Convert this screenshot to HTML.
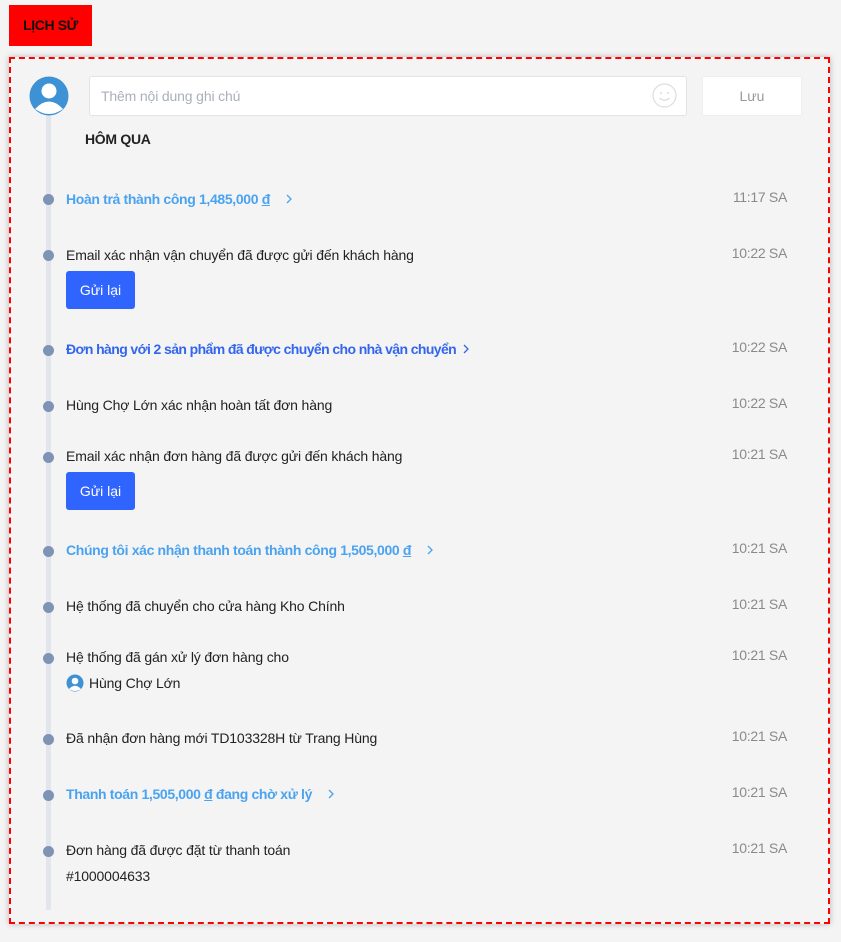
<!DOCTYPE html>
<html><head><meta charset="utf-8"><style>
*{margin:0;padding:0;box-sizing:border-box}
body{width:841px;height:942px;background:#f4f4f4;font-family:"Liberation Sans",Arial,sans-serif;position:relative;overflow:hidden;color:#222}
.a{position:absolute;white-space:nowrap}
.t{font-size:14px;left:66px;line-height:18px;letter-spacing:-0.15px}
.tm{font-size:14px;color:#8a8a8a;right:54px;line-height:18px;letter-spacing:-0.3px}
.dot{position:absolute;left:43px;width:11px;height:11px;border-radius:50%;background:#7f93b5}
.lb{color:#4aa3f0;font-weight:bold;letter-spacing:-0.35px}
.db{color:#3366ee;font-weight:bold;letter-spacing:-0.6px}
.btn{position:absolute;left:66px;width:69px;height:38px;background:#2f64ff;color:#fff;border-radius:3px;font-size:14px;line-height:38px;text-align:center}
.ch{display:inline-block;vertical-align:middle;margin-left:12px;margin-top:-3px}
</style></head><body>
<div class="a" style="left:9px;top:5px;width:83px;height:41px;background:#f00;color:#111;font-weight:bold;font-size:14px;line-height:41px;text-align:center;letter-spacing:-0.4px">LỊCH SỬ</div>
<div class="a" style="left:9px;top:57px;width:821px;height:867px;border:2px dashed #f00;box-shadow:0 0 6px rgba(0,0,0,.25)"></div>
<div class="a" style="left:46px;top:110px;width:5px;height:800px;background:#e2e6ec"></div>
<svg class="a" style="left:29px;top:76px" width="40" height="40" viewBox="0 0 40 40"><circle cx="20" cy="20" r="19.5" fill="#3d92d6"/><circle cx="20" cy="15" r="7.5" fill="#fff"/><path d="M6 33 Q20 18 34 33 Q20 43 6 33Z" fill="#fff"/></svg>
<div class="a" style="left:89px;top:76px;width:598px;height:40px;background:#fff;border:1px solid #e4e4e4;border-radius:3px;font-size:14px;color:#aab0b8;line-height:38px;padding-left:11px;letter-spacing:-0.15px">Thêm nội dung ghi chú</div>
<svg class="a" style="left:652px;top:83px" width="25" height="25" viewBox="0 0 25 25"><circle cx="12.5" cy="12.5" r="11.5" fill="none" stroke="#ddd" stroke-width="1.2"/><circle cx="9" cy="10" r="1" fill="#ddd"/><circle cx="16" cy="10" r="1" fill="#ddd"/><path d="M7.5 15 Q12.5 19.5 17.5 15" fill="none" stroke="#ddd" stroke-width="1.2"/></svg>
<div class="a" style="left:702px;top:76px;width:100px;height:40px;background:#fff;border:1px solid #eee;border-radius:3px;font-size:14px;color:#999;line-height:38px;text-align:center">Lưu</div>
<div class="a" style="left:85px;top:130px;font-size:14px;font-weight:bold;color:#222;line-height:18px;letter-spacing:-0.3px">HÔM QUA</div>

<div class="dot" style="top:194px"></div><div class="a t lb" style="top:190px">Hoàn trả thành công 1,485,000 <u>đ</u><svg class="ch" style="margin-left:16px" width="6" height="10" viewBox="0 0 6 10"><path d="M1 1l4 4-4 4" fill="none" stroke="#4aa3f0" stroke-width="1.3"/></svg></div><div class="a tm" style="top:188px">11:17 SA</div>
<div class="dot" style="top:250px"></div><div class="a t" style="top:246px">Email xác nhận vận chuyển đã được gửi đến khách hàng</div><div class="a tm" style="top:244px">10:22 SA</div>
<div class="btn" style="top:271px">Gửi lại</div>
<div class="dot" style="top:345px"></div><div class="a t db" style="top:340px">Đơn hàng với 2 sản phẩm đã được chuyển cho nhà vận chuyển<svg class="ch" style="margin-left:7px" width="6" height="10" viewBox="0 0 6 10"><path d="M1 1l4 4-4 4" fill="none" stroke="#3366ee" stroke-width="1.3"/></svg></div><div class="a tm" style="top:338px">10:22 SA</div>
<div class="dot" style="top:401px"></div><div class="a t" style="top:396px">Hùng Chợ Lớn xác nhận hoàn tất đơn hàng</div><div class="a tm" style="top:394px">10:22 SA</div>
<div class="dot" style="top:452px"></div><div class="a t" style="top:447px">Email xác nhận đơn hàng đã được gửi đến khách hàng</div><div class="a tm" style="top:445px">10:21 SA</div>
<div class="btn" style="top:472px">Gửi lại</div>
<div class="dot" style="top:546px"></div><div class="a t lb" style="top:541px">Chúng tôi xác nhận thanh toán thành công 1,505,000 <u>đ</u><svg class="ch" style="margin-left:16px" width="6" height="10" viewBox="0 0 6 10"><path d="M1 1l4 4-4 4" fill="none" stroke="#4aa3f0" stroke-width="1.3"/></svg></div><div class="a tm" style="top:539px">10:21 SA</div>
<div class="dot" style="top:602px"></div><div class="a t" style="top:597px">Hệ thống đã chuyển cho cửa hàng Kho Chính</div><div class="a tm" style="top:595px">10:21 SA</div>
<div class="dot" style="top:653px"></div><div class="a t" style="top:648px">Hệ thống đã gán xử lý đơn hàng cho</div><div class="a tm" style="top:646px">10:21 SA</div>
<svg class="a" style="left:66px;top:674px" width="18" height="18" viewBox="0 0 18 18"><circle cx="9" cy="9" r="8.5" fill="#3d92d6"/><circle cx="9" cy="7" r="3.3" fill="#fff"/><path d="M3 15 Q9 8.5 15 15 Q9 19 3 15Z" fill="#fff"/></svg>
<div class="a" style="left:89px;top:674px;font-size:14px;line-height:18px;letter-spacing:-0.15px">Hùng Chợ Lớn</div>
<div class="dot" style="top:734px"></div><div class="a t" style="top:729px">Đã nhận đơn hàng mới TD103328H từ Trang Hùng</div><div class="a tm" style="top:727px">10:21 SA</div>
<div class="dot" style="top:790px"></div><div class="a t lb" style="top:785px">Thanh toán 1,505,000 <u>đ</u> đang chờ xử lý<svg class="ch" style="margin-left:16px" width="6" height="10" viewBox="0 0 6 10"><path d="M1 1l4 4-4 4" fill="none" stroke="#4aa3f0" stroke-width="1.3"/></svg></div><div class="a tm" style="top:783px">10:21 SA</div>
<div class="dot" style="top:846px"></div><div class="a t" style="top:841px">Đơn hàng đã được đặt từ thanh toán</div><div class="a tm" style="top:839px">10:21 SA</div>
<div class="a t" style="top:867px">#1000004633</div>
</body></html>
